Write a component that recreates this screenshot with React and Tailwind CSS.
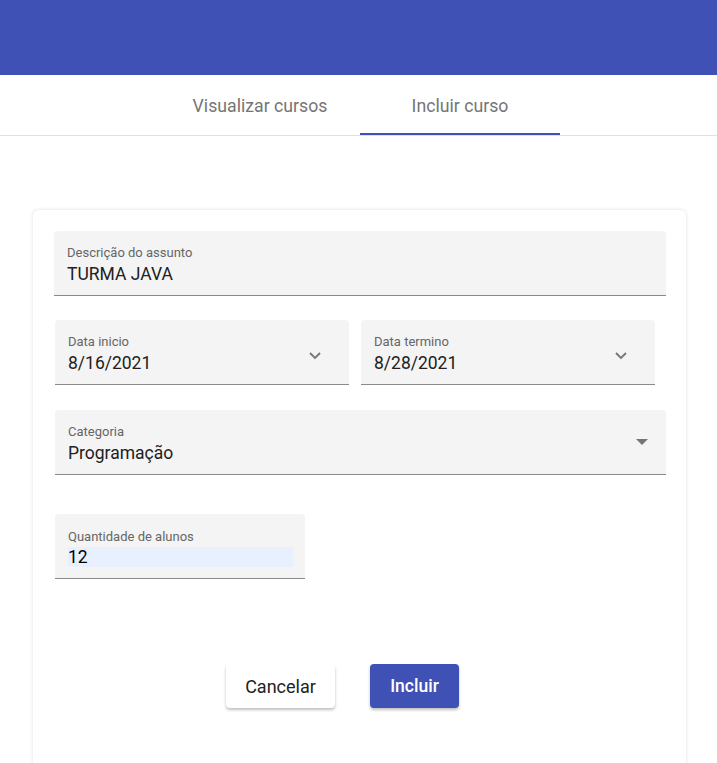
import React from 'react';

const Field = ({ label, value, className = '', children }) => (
  <div className={`relative bg-[#f4f4f4] rounded-t-[4px] border-b border-[#8a8a8a] h-[65px] px-[13px] ${className}`}>
    <div className="pt-[14px] text-[13px] leading-[15px] text-[#666]">{label}</div>
    <div className="mt-[2px] text-[17.5px] leading-[24px] text-[#212121]">{value}</div>
    {children}
  </div>
);

const Chevron = () => (
  <svg className="absolute right-[27px] top-[31px]" width="14" height="9" viewBox="0 0 14 9" fill="none">
    <path d="M2 2l5 5 5-5" stroke="#757575" strokeWidth="1.8" />
  </svg>
);

export default function App() {
  return (
    <div className="min-h-[763px] bg-white font-['Roboto',sans-serif]">
      <div className="h-[75px] bg-[#3f51b5]" />
      <div className="flex justify-center border-b border-[#e0e0e0] h-[61px] pl-[3px]">
        <div className="w-[200px] flex items-center justify-center pt-[3px] text-[17.7px] text-[#757575]">
          Visualizar cursos
        </div>
        <div className="w-[200px] flex items-center justify-center pt-[5px] text-[17.7px] text-[#757575] border-b-2 border-[#3f51b5]">
          Incluir curso
        </div>
      </div>

      <div className="mt-[74px] ml-[33px] mr-[31px] h-[560px] rounded-[6px] bg-white shadow-[0_0_4px_rgba(0,0,0,0.12)] pl-[21px] pr-[20px] pt-[21px]">
        <Field label="Descrição do assunto" value="TURMA JAVA" />

        <div className="flex gap-[12px] mt-[24px] pl-[1px] pr-[11px]">
          <Field label="Data inicio" value="8/16/2021" className="flex-1">
            <Chevron />
          </Field>
          <Field label="Data termino" value="8/28/2021" className="flex-1">
            <Chevron />
          </Field>
        </div>

        <Field label="Categoria" value="Programação" className="mt-[25px] ml-[1px]">
          <svg className="absolute right-[18px] top-[29px]" width="12" height="6" viewBox="0 0 12 6">
            <path d="M0 0h12L6 6z" fill="#757575" />
          </svg>
        </Field>

        <div className="mt-[39px] ml-[1px] w-[250px] relative bg-[#f4f4f4] rounded-t-[4px] border-b border-[#8a8a8a] h-[65px] px-[13px]">
          <div className="pt-[15px] text-[13px] leading-[15px] text-[#666]">Quantidade de alunos</div>
          <div className="mt-[3px] bg-[#e8f0fe] w-[225px] h-[20px] text-[17.5px] leading-[20px] text-black">12</div>
        </div>

        <div className="flex justify-center gap-[35px] mt-[85px] pr-[35px]">
          <button className="w-[109px] h-[44px] rounded-[4px] bg-white text-[18px] text-[#212121] shadow-[0_2px_3px_rgba(0,0,0,0.25)]">
            Cancelar
          </button>
          <button className="w-[89px] h-[44px] rounded-[4px] bg-[#3f51b5] text-[17.5px] font-medium text-white shadow-[0_2px_3px_rgba(0,0,0,0.25)]">
            Incluir
          </button>
        </div>
      </div>
    </div>
  );
}
